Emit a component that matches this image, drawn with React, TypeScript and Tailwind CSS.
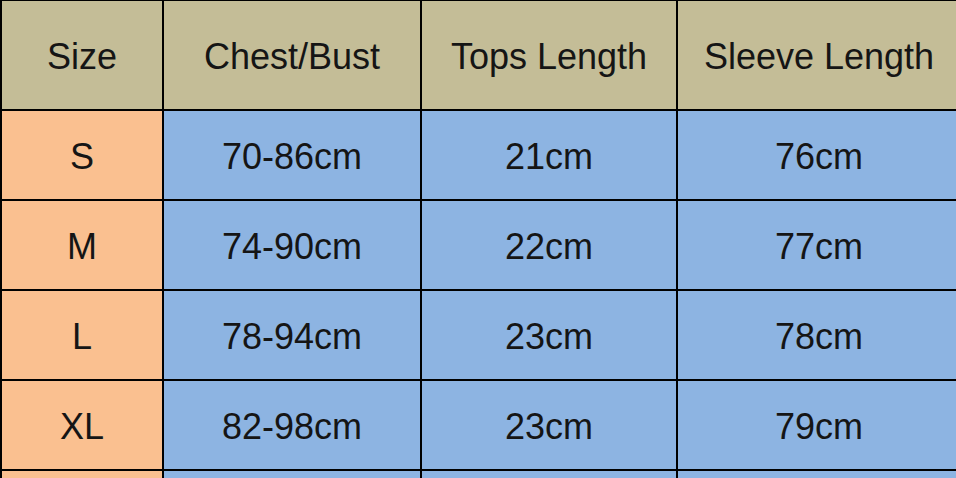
const HEAD = ["Size", "Chest/Bust", "Tops Length", "Sleeve Length"]

const ROWS = [
  ["S", "70-86cm", "21cm", "76cm"],
  ["M", "74-90cm", "22cm", "77cm"],
  ["L", "78-94cm", "23cm", "78cm"],
  ["XL", "82-98cm", "23cm", "79cm"],
  ["", "", "", ""],
]

export default function App() {
  return (
    <div
      className="w-[956px] h-[478px] overflow-hidden bg-black"
      style={{ fontFamily: '"Liberation Sans", Arial, sans-serif' }}
    >
      <div className="w-[960px] pl-[2px] pt-[1px] grid grid-cols-[160px_256px_254px_282px] grid-rows-[108px_88px_88px_88px_88px_88px] gap-[2px] text-[36px] text-[#151515]">
        {HEAD.map((h) => (
          <div key={h} className="flex items-center justify-center pt-[3px] bg-[#c4bd97]">
            {h}
          </div>
        ))}
        {ROWS.map((r, i) =>
          r.map((c, j) => (
            <div
              key={`${i}-${j}`}
              className={`flex items-center justify-center pt-[3px] ${j === 0 ? "bg-[#fac090]" : "bg-[#8db4e2]"}`}
            >
              {c}
            </div>
          ))
        )}
      </div>
    </div>
  )
}
